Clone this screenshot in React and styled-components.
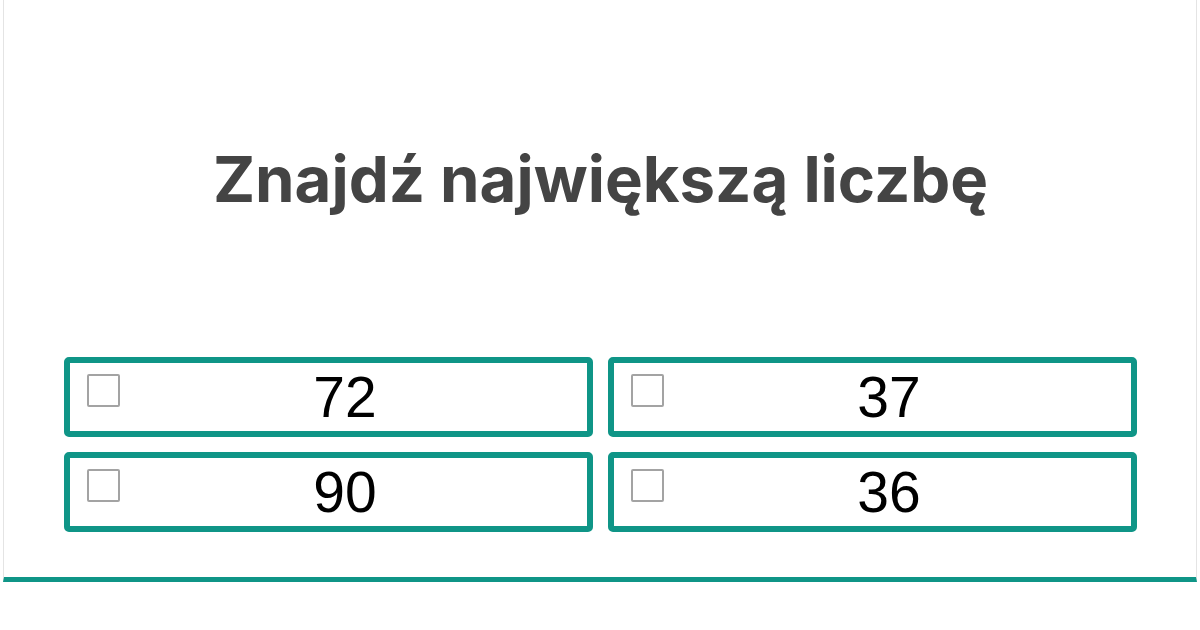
import styled, { createGlobalStyle } from "styled-components";

const GlobalStyle = createGlobalStyle`
  body {
    margin: 0;
    background: #ffffff;
    font-family: Inter, "Liberation Sans", sans-serif;
  }
`;

const Page = styled.div`
  width: 1200px;
  height: 630px;
  padding: 0 3px;
  box-sizing: border-box;
`;

const Card = styled.div`
  height: 582px;
  box-sizing: border-box;
  border-left: 1px solid #e4e4e4;
  border-right: 1px solid #e4e4e4;
  border-bottom: 5px solid #0f9587;
  padding: 0 59px 0 60px;
  display: flex;
  flex-direction: column;
`;

const Title = styled.h1`
  margin: 0;
  height: 357px;
  display: flex;
  align-items: center;
  justify-content: center;
  padding-bottom: 1px;
  box-sizing: border-box;
  font-family: Inter, "Liberation Sans", sans-serif;
  font-weight: 700;
  font-size: 63.5px;
  color: #444444;
`;

const Answers = styled.div`
  display: grid;
  grid-template-columns: 1fr 1fr;
  grid-auto-rows: 80px;
  gap: 15px;
`;

const Answer = styled.label`
  display: flex;
  align-items: flex-start;
  border: 6px solid #0f9587;
  border-radius: 5px;
  box-sizing: border-box;
  padding: 11px 17px;
  cursor: pointer;
`;

const Box = styled.span`
  flex: none;
  width: 33px;
  height: 33px;
  box-sizing: border-box;
  border: 2px solid #a3a3a3;
  border-radius: 2px;
`;

const Value = styled.span`
  flex: 1;
  align-self: center;
  margin-top: 1px;
  text-align: center;
  font-family: "Liberation Sans", Arial, sans-serif;
  font-size: 57px;
  line-height: 1;
  color: #000;
`;

const numbers = [72, 37, 90, 36];

export default function App() {
  return (
    <Page>
      <GlobalStyle />
      <Card>
        <Title>Znajdź największą liczbę</Title>
        <Answers>
          {numbers.map((n) => (
            <Answer key={n}>
              <Box />
              <Value>{n}</Value>
            </Answer>
          ))}
        </Answers>
      </Card>
    </Page>
  );
}
